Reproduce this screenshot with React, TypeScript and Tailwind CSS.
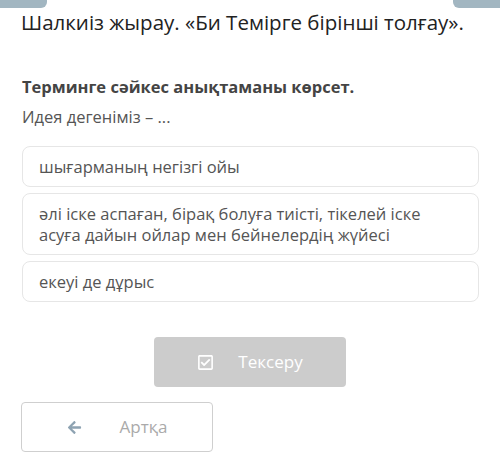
import { FaRegCheckSquare, FaArrowLeft } from "react-icons/fa";

const options = [
  "шығарманың негізгі ойы",
  "әлі іске аспаған, бірақ болуға тиісті, тікелей іске асуға дайын ойлар мен бейнелердің жүйесі",
  "екеуі де дұрыс",
];

export default function App() {
  return (
    <div
      className="w-[500px] h-[454px] bg-white overflow-hidden flex flex-col"
      style={{ fontFamily: '"Open Sans", "Noto Sans", sans-serif' }}
    >
      <div className="flex justify-between h-[8px] shrink-0">
        <div className="w-[47px] h-[8px] bg-[#a2b6c1] rounded-br-[6px]" />
        <div className="w-[47px] h-[8px] bg-[#a2b6c1] rounded-bl-[6px]" />
      </div>

      <h1 className="pl-[21px] text-[20.5px] leading-[28px] text-[#222] whitespace-nowrap">
        Шалкиіз жырау. «Би Темірге бірінші толғау».
      </h1>

      <div className="pl-[22px] pt-[40px] text-[16.5px] leading-[22px] font-bold text-[#444]">
        Терминге сәйкес анықтаманы көрсет.
      </div>
      <div className="pl-[22px] pt-[8px] text-[16.5px] leading-[22px] text-[#555]">
        Идея дегеніміз – ...
      </div>

      <div className="flex flex-col gap-[6px] pl-[22px] pr-[21px] pt-[18px]">
        {options.map((o) => (
          <div
            key={o}
            className="border border-[#e6e6e6] rounded-[8px] pl-[16px] pr-[40px] py-[9px] text-[16.5px] leading-[21px] text-[#555]"
          >
            {o}
          </div>
        ))}
      </div>

      <div className="flex justify-center pt-[35px]">
        <button className="w-[192px] h-[50px] bg-[#cccccc] rounded-[4px] flex items-center justify-center gap-[24px] text-white text-[17px]">
          <FaRegCheckSquare className="w-[17px] h-[17px]" />
          <span>Тексеру</span>
        </button>
      </div>

      <div className="pl-[21px] pt-[15px]">
        <button className="w-[192px] h-[50px] border border-[#cfcfcf] rounded-[4px] flex items-center justify-center gap-[38px] text-[#aaa] text-[17px]">
          <FaArrowLeft className="w-[15px] h-[15px] text-[#8ea3b2]" />
          <span>Артқа</span>
        </button>
      </div>
    </div>
  );
}
